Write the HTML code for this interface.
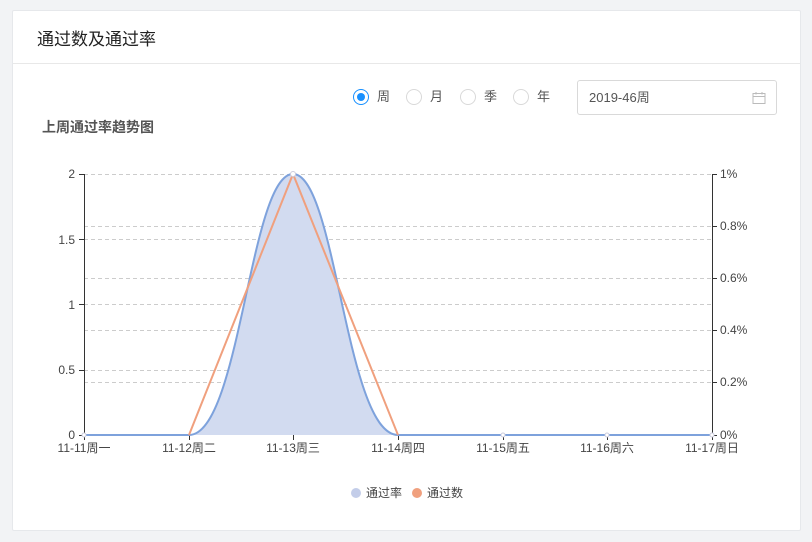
<!DOCTYPE html>
<html><head><meta charset="utf-8"><style>
body{margin:0;width:812px;height:542px;background:#f2f3f5;font-family:"Liberation Sans","Noto Sans CJK SC",sans-serif;position:relative;overflow:hidden}
.card{position:absolute;left:12px;top:10px;width:789px;height:521px;background:#fff;border:1px solid #e6e8eb;border-radius:2px;box-sizing:border-box}
.hd{height:52px;border-bottom:1px solid #e8e8e8;font-size:17px;color:#222;line-height:58px;padding-left:24px;box-sizing:content-box}
.r{position:absolute;top:89px;font-size:13px;line-height:16px;color:#555}
.dot{position:absolute;width:16px;height:16px;border:1px solid #d9d9d9;border-radius:50%;box-sizing:border-box;top:89px}
.inp{position:absolute;left:577px;top:80px;width:200px;height:35px;border:1px solid #d9d9d9;border-radius:3px;box-sizing:border-box;font-size:13px;color:#555;line-height:33px;padding-left:11px}
.sub{position:absolute;left:42px;top:117px;font-size:14px;font-weight:bold;color:#555}
</style></head><body>
<div class="card"><div class="hd">通过数及通过率</div></div>
<div class="dot" style="left:353px;border-color:#1890ff"><div style="position:absolute;left:3px;top:3px;width:8px;height:8px;border-radius:50%;background:#1890ff"></div></div>
<span class="r" style="left:377px">周</span>
<div class="dot" style="left:406px"></div><span class="r" style="left:430px">月</span>
<div class="dot" style="left:460px"></div><span class="r" style="left:484px">季</span>
<div class="dot" style="left:513px"></div><span class="r" style="left:537px">年</span>
<div class="inp">2019-46周
<svg style="position:absolute;right:10px;top:10px" width="14" height="14" viewBox="0 0 14 14"><rect x="1" y="2.5" width="12" height="10" fill="none" stroke="#bbb"/><line x1="1" y1="5.5" x2="13" y2="5.5" stroke="#bbb"/><line x1="4" y1="1" x2="4" y2="3.5" stroke="#bbb"/><line x1="10" y1="1" x2="10" y2="3.5" stroke="#bbb"/></svg></div>
<div class="sub">上周通过率趋势图</div>
<svg style="position:absolute;left:0;top:0" width="812" height="542" font-family="Liberation Sans,Noto Sans CJK SC,sans-serif" font-size="12" fill="#444">
<g stroke="#ccc" stroke-dasharray="4,3">
<line x1="84" x2="712" y1="174.5" y2="174.5"/><line x1="84" x2="712" y1="239.5" y2="239.5"/><line x1="84" x2="712" y1="304.5" y2="304.5"/><line x1="84" x2="712" y1="370.5" y2="370.5"/>
<line x1="84" x2="712" y1="226.5" y2="226.5"/><line x1="84" x2="712" y1="278.5" y2="278.5"/><line x1="84" x2="712" y1="330.5" y2="330.5"/><line x1="84" x2="712" y1="382.5" y2="382.5"/>
</g>
<g stroke="#333"><line x1="84.5" y1="174" x2="84.5" y2="435"/><line x1="712.5" y1="174" x2="712.5" y2="435"/>
<line x1="79" x2="84" y1="174.5" y2="174.5"/><line x1="79" x2="84" y1="239.5" y2="239.5"/><line x1="79" x2="84" y1="304.5" y2="304.5"/><line x1="79" x2="84" y1="370.5" y2="370.5"/><line x1="79" x2="84" y1="435.5" y2="435.5"/>
<line x1="712" x2="717" y1="174.5" y2="174.5"/><line x1="712" x2="717" y1="226.5" y2="226.5"/><line x1="712" x2="717" y1="278.5" y2="278.5"/><line x1="712" x2="717" y1="330.5" y2="330.5"/><line x1="712" x2="717" y1="382.5" y2="382.5"/><line x1="712" x2="717" y1="435.5" y2="435.5"/>
<line x1="189.5" x2="189.5" y1="435" y2="440"/><line x1="293.5" x2="293.5" y1="435" y2="440"/><line x1="398.5" x2="398.5" y1="435" y2="440"/><line x1="503.5" x2="503.5" y1="435" y2="440"/><line x1="607.5" x2="607.5" y1="435" y2="440"/><line x1="84.5" x2="84.5" y1="435" y2="440"/><line x1="712.5" x2="712.5" y1="435" y2="440"/>
</g>
<path d="M189,435 C240,435 250,174 293,174 C336,174 346,435 398,435 Z" fill="#d2dbf0"/>
<path d="M84,435 L189,435 C240,435 250,174 293,174 C336,174 346,435 398,435 L712,435" fill="none" stroke="#7ea2dc" stroke-width="2"/>
<path d="M189,435 L293,174 L398,435" fill="none" stroke="#f0a07e" stroke-width="2"/>
<g fill="#fff" stroke="#ccd"><circle cx="293" cy="174" r="2.5"/><circle cx="503" cy="435" r="2"/><circle cx="607" cy="435" r="2"/><circle cx="712" cy="435" r="2"/><circle cx="84" cy="435" r="2"/></g>
<g text-anchor="end"><text x="75" y="178">2</text><text x="75" y="244">1.5</text><text x="75" y="309">1</text><text x="75" y="374">0.5</text><text x="75" y="439">0</text></g>
<g><text x="720" y="178">1%</text><text x="720" y="230">0.8%</text><text x="720" y="282">0.6%</text><text x="720" y="334">0.4%</text><text x="720" y="386">0.2%</text><text x="720" y="439">0%</text></g>
<g text-anchor="middle"><text x="84" y="452">11-11周一</text><text x="189" y="452">11-12周二</text><text x="293" y="452">11-13周三</text><text x="398" y="452">11-14周四</text><text x="503" y="452">11-15周五</text><text x="607" y="452">11-16周六</text><text x="712" y="452">11-17周日</text></g>
<circle cx="356" cy="493" r="5" fill="#c3cde9"/><text x="366" y="497">通过率</text>
<circle cx="417" cy="493" r="5" fill="#f0a07e"/><text x="427" y="497">通过数</text>
</svg>
</body></html>
